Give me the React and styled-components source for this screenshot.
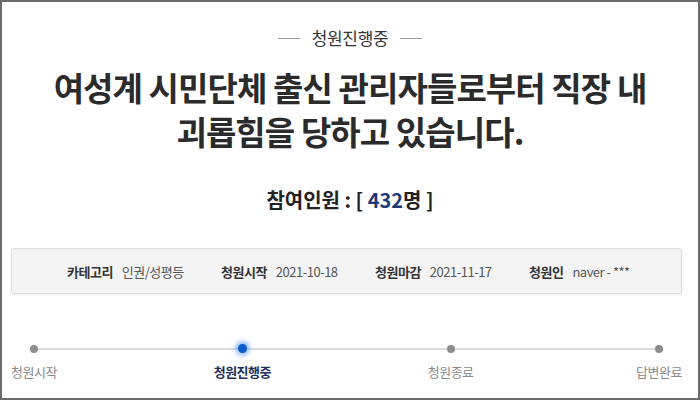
import React from "react";
import styled, { createGlobalStyle } from "styled-components";

const Global = createGlobalStyle`
  html, body {
    margin: 0;
    padding: 0;
    background: #fff;
  }
  body {
    font-family: "Noto Sans CJK KR", "Noto Sans", sans-serif;
  }
`;

const Page = styled.div`
  width: 700px;
  height: 400px;
  box-sizing: border-box;
  border: 2px solid #6b6b6b;
  display: flex;
  flex-direction: column;
  align-items: center;
  overflow: hidden;
`;

const Status = styled.div`
  margin-top: 24px;
  display: flex;
  align-items: center;
  gap: 12px;
  font-size: 17px;
  color: #333;
  line-height: 24px;
  letter-spacing: -0.3px;
  &::before,
  &::after {
    content: "";
    width: 22px;
    height: 1px;
    background: #999;
  }
`;

const Title = styled.h1`
  margin: 15px 0 0;
  font-size: 33px;
  font-weight: 700;
  line-height: 44px;
  color: #2b2b2b;
  text-align: center;
  letter-spacing: -0.9px;
  word-break: keep-all;
  width: 660px;
`;

const Count = styled.div`
  margin-top: 33px;
  font-size: 20px;
  font-weight: 700;
  color: #222;
  line-height: 28px;
  span {
    color: #1c3a78;
  }
`;

const InfoBox = styled.div`
  margin-top: 34px;
  align-self: stretch;
  margin-left: 9px;
  margin-right: 16px;
  height: 46px;
  box-sizing: border-box;
  background: #f4f4f4;
  border: 1px solid #dcdcdc;
  border-radius: 3px;
  box-shadow: 0 1px 2px rgba(0, 0, 0, 0.08);
  display: grid;
  grid-template-columns: repeat(4, 154px);
  align-items: center;
  padding-left: 55px;
`;

const Info = styled.div`
  display: flex;
  gap: 9px;
  font-size: 13px;
  color: #555;
  letter-spacing: -0.5px;
  b {
    color: #333;
    font-weight: 700;
  }
`;

const Steps = styled.div`
  position: relative;
  align-self: stretch;
  margin: 49px 10px 0 3px;
  display: flex;
  justify-content: space-between;
  &::before {
    content: "";
    position: absolute;
    left: 28px;
    right: 28px;
    top: 5px;
    height: 2px;
    background: #dcdcdc;
  }
`;

const Step = styled.div`
  position: relative;
  width: 58px;
  display: flex;
  flex-direction: column;
  align-items: center;
  gap: 9px;
  font-size: 13px;
  white-space: nowrap;
  letter-spacing: -0.5px;
  color: ${(p) => (p.active ? "#1d2f5c" : "#8a8a8a")};
  font-weight: ${(p) => (p.active ? 700 : 400)};
`;

const Dot = styled.i`
  display: block;
  width: ${(p) => (p.active ? 9 : 8)}px;
  height: ${(p) => (p.active ? 9 : 8)}px;
  margin-top: ${(p) => (p.active ? 1 : 2)}px;
  border-radius: 50%;
  background: ${(p) => (p.active ? "#0b5ccc" : "#8c8c8c")};
  box-shadow: ${(p) => (p.active ? "0 0 4px 3px rgba(40,120,240,0.45)" : "none")};
`;

const steps = ["청원시작", "청원진행중", "청원종료", "답변완료"];

export default function App() {
  return (
    <>
      <Global />
      <Page>
        <Status>청원진행중</Status>
        <Title>여성계 시민단체 출신 관리자들로부터 직장 내 괴롭힘을 당하고 있습니다.</Title>
        <Count>
          참여인원 : [ <span>432</span>명 ]
        </Count>
        <InfoBox>
          <Info><b>카테고리</b>인권/성평등</Info>
          <Info><b>청원시작</b>2021-10-18</Info>
          <Info><b>청원마감</b>2021-11-17</Info>
          <Info><b>청원인</b>naver - ***</Info>
        </InfoBox>
        <Steps>
          {steps.map((s, i) => (
            <Step key={s} active={i === 1}>
              <Dot active={i === 1} />
              {s}
            </Step>
          ))}
        </Steps>
      </Page>
    </>
  );
}
